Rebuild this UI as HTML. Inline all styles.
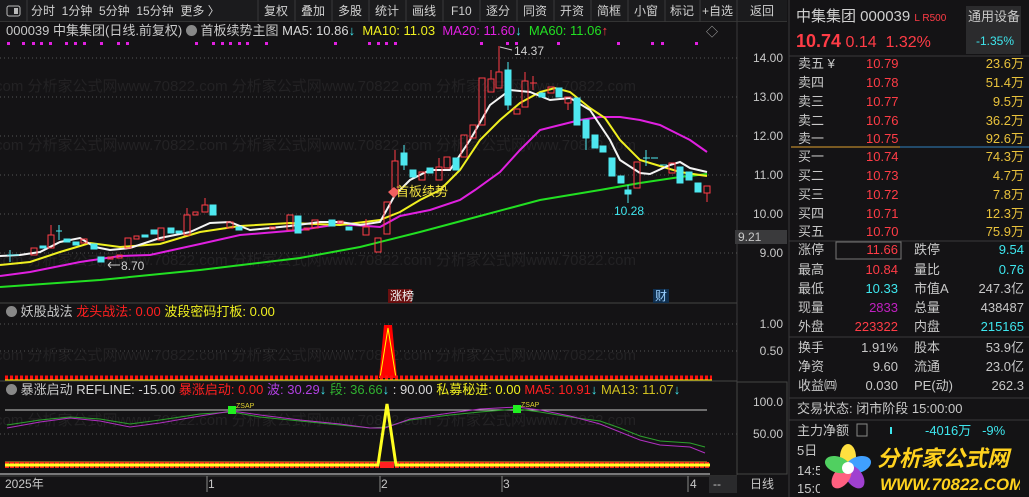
<!DOCTYPE html><html><head><meta charset="utf-8"><style>
*{margin:0;padding:0;box-sizing:border-box}
body{width:1029px;height:497px;background:#141315;overflow:hidden;position:relative;font-family:"Liberation Sans","Noto Sans CJK SC",sans-serif;font-size:12px;color:#c8c8c8}
.a{position:absolute;white-space:nowrap;line-height:14px}
.tb{position:absolute;top:0;height:22px;line-height:22px;font-size:12px;color:#d0d0d0}
.r{color:#ff3c46}.c{color:#3ee6ee}.y{color:#e9c23c}.w{color:#d8d8d8}
.rt{text-align:right}
.row{position:absolute;left:798px;width:226px;height:18px;line-height:18px;font-size:13px;display:flex;overflow:hidden}
.row span{display:block}
</style></head><body>
<div style="position:absolute;left:0;top:0;width:787px;height:22px;background:#1b1b1d;border-bottom:1px solid #333"></div>
<svg style="position:absolute;left:0;top:0" width="1029" height="497">
<rect x="7" y="6" width="13" height="10" rx="2" fill="none" stroke="#bbb"/><rect x="14" y="8" width="4" height="6" fill="#bbb"/>
<g stroke="#3a3a3a"><line x1="27" y1="0" x2="27" y2="22"/><line x1="258" y1="0" x2="258" y2="22"/><line x1="295" y1="0" x2="295" y2="22"/><line x1="332" y1="0" x2="332" y2="22"/><line x1="369" y1="0" x2="369" y2="22"/><line x1="406" y1="0" x2="406" y2="22"/><line x1="443" y1="0" x2="443" y2="22"/><line x1="480" y1="0" x2="480" y2="22"/><line x1="517" y1="0" x2="517" y2="22"/><line x1="554" y1="0" x2="554" y2="22"/><line x1="591" y1="0" x2="591" y2="22"/><line x1="628" y1="0" x2="628" y2="22"/><line x1="665" y1="0" x2="665" y2="22"/><line x1="700" y1="0" x2="700" y2="22"/><line x1="737" y1="0" x2="737" y2="22"/></g>
<line x1="737" y1="22" x2="737" y2="475" stroke="#3a3a3a"/>
<line x1="789" y1="0" x2="789" y2="497" stroke="#3a3a3a"/>
<g stroke="#555" stroke-dasharray="1,3">
<line x1="0" y1="58" x2="737" y2="58"/><line x1="0" y1="97" x2="737" y2="97"/><line x1="0" y1="136" x2="737" y2="136"/><line x1="0" y1="175" x2="737" y2="175"/><line x1="0" y1="214" x2="737" y2="214"/><line x1="0" y1="253" x2="737" y2="253"/>
<line x1="0" y1="324" x2="737" y2="324"/><line x1="0" y1="351" x2="737" y2="351"/><line x1="0" y1="434" x2="737" y2="434"/>
</g>
<g stroke="#444"><line x1="0" y1="303" x2="737" y2="303"/><line x1="0" y1="381" x2="737" y2="381"/><line x1="0" y1="476" x2="737" y2="476"/></g>
<g fill="#232224" font-size="15" font-family="Liberation Sans,Noto Sans CJK SC,sans-serif">
<text x="-5" y="91">com 分析家公式网www.70822.com 分析家公式网www.70822.com 分析家公式网www.70822.com</text>
<text x="-5" y="150">com 分析家公式网www.70822.com 分析家公式网www.70822.com 分析家公式网www.70822.com</text>
<text x="-5" y="265">com 分析家公式网www.70822.com 分析家公式网www.70822.com 分析家公式网www.70822.com</text>
<text x="-5" y="360">com 分析家公式网www.70822.com 分析家公式网www.70822.com 分析家公式网www.70822.com</text>
<text x="-5" y="425">com 分析家公式网www.70822.com 分析家公式网www.70822.com 分析家公式网www.70822.com</text>
</g>
<g fill="#e020e0"><rect x="7" y="42" width="3" height="3"/><rect x="22" y="42" width="3" height="3"/><rect x="32" y="42" width="3" height="3"/><rect x="40" y="42" width="3" height="3"/><rect x="49" y="42" width="3" height="3"/><rect x="65" y="42" width="3" height="3"/><rect x="74" y="42" width="3" height="3"/><rect x="83" y="42" width="3" height="3"/><rect x="100" y="42" width="3" height="3"/><rect x="117" y="42" width="3" height="3"/><rect x="126" y="42" width="3" height="3"/><rect x="195" y="42" width="3" height="3"/><rect x="212" y="42" width="3" height="3"/><rect x="221" y="42" width="3" height="3"/><rect x="229" y="42" width="3" height="3"/><rect x="238" y="42" width="3" height="3"/><rect x="246" y="42" width="3" height="3"/><rect x="265" y="42" width="3" height="3"/><rect x="334" y="42" width="3" height="3"/><rect x="368" y="42" width="3" height="3"/><rect x="377" y="42" width="3" height="3"/><rect x="385" y="42" width="3" height="3"/><rect x="394" y="42" width="3" height="3"/><rect x="480" y="42" width="3" height="3"/><rect x="506" y="42" width="3" height="3"/><rect x="515" y="42" width="3" height="3"/><rect x="557" y="42" width="3" height="3"/><rect x="617" y="42" width="3" height="3"/><rect x="651" y="42" width="3" height="3"/><rect x="661" y="42" width="3" height="3"/><rect x="695" y="42" width="3" height="3"/></g>
<polyline fill="none" stroke="#22e022" stroke-width="2" points="0,287 100,280 200,270 300,258 360,247 420,232 480,216 540,200 600,190 640,183 680,177 707,174"/>
<polyline fill="none" stroke="#e020e0" stroke-width="2" points="0,276 30,272 80,262 120,256 150,255 200,244 240,235 300,230 340,224 380,227 400,216 430,210 460,200 475,190 500,172 520,150 540,130 560,125 580,120 600,117 620,117 640,120 660,125 680,135 690,140 707,152"/>
<polyline fill="none" stroke="#f0f020" stroke-width="2" points="0,265 30,262 60,252 90,243 120,247 160,244 200,232 240,226 290,223 340,225 380,220 400,212 420,200 440,190 460,170 480,140 500,120 520,103 540,92 555,88 570,92 590,108 605,118 620,140 640,160 660,166 680,172 700,175 707,176"/>
<polyline fill="none" stroke="#f4f4f4" stroke-width="2" points="0,256 20,255 40,252 60,242 80,238 95,247 110,250 130,248 160,238 190,232 210,223 230,222 250,230 270,228 290,226 320,222 340,222 360,225 380,222 395,195 410,180 430,170 450,170 470,140 490,105 510,90 530,92 550,100 570,98 590,110 610,140 620,160 640,173 650,174 670,165 680,162 690,168 707,172"/>
<g stroke="#ff3c46" fill="none">
<rect x="31" y="248" width="6" height="7"/><rect x="48" y="235" width="6" height="13"/><line x1="51" y1="225" x2="51" y2="235"/><rect x="81" y="239" width="6" height="4"/><rect x="108" y="257" width="5" height="2"/><rect x="117" y="255" width="5" height="3"/><rect x="125" y="238" width="6" height="10"/><rect x="134" y="236" width="5" height="3"/><rect x="158" y="228" width="6" height="12"/><rect x="184" y="215" width="6" height="20"/><line x1="187" y1="208" x2="187" y2="215"/><rect x="193" y="212" width="5" height="3"/><rect x="202" y="205" width="6" height="7"/><line x1="205" y1="198" x2="205" y2="205"/><rect x="227" y="222" width="6" height="6"/><rect x="270" y="227" width="5" height="2"/><rect x="287" y="215" width="6" height="15"/><rect x="304" y="228" width="5" height="2"/><rect x="312" y="220" width="6" height="8"/><rect x="338" y="221" width="5" height="2"/><rect x="363" y="227" width="6" height="8"/><line x1="366" y1="219" x2="366" y2="227"/>
<rect x="375" y="238" width="6" height="14"/><rect x="384" y="202" width="6" height="32"/><rect x="392" y="161" width="6" height="32"/><line x1="395" y1="150" x2="395" y2="161"/><rect x="419" y="172" width="6" height="8"/><rect x="436" y="167" width="6" height="13"/><line x1="439" y1="158" x2="439" y2="167"/><rect x="444" y="157" width="6" height="11"/><rect x="461" y="135" width="6" height="22"/><rect x="470" y="125" width="6" height="13"/><rect x="479" y="78" width="6" height="47"/><rect x="488" y="79" width="6" height="13"/><line x1="491" y1="70" x2="491" y2="79"/><rect x="496" y="72" width="6" height="16"/><line x1="499" y1="46" x2="499" y2="72"/><rect x="514" y="109" width="6" height="5"/><rect x="522" y="81" width="6" height="26"/><line x1="525" y1="72" x2="525" y2="81"/><line x1="530" y1="83" x2="537" y2="83"/><line x1="533" y1="76" x2="533" y2="90"/><rect x="548" y="87" width="6" height="6"/><rect x="565" y="97" width="6" height="6"/><line x1="568" y1="103" x2="568" y2="110"/><rect x="634" y="162" width="6" height="26"/><rect x="669" y="163" width="6" height="10"/><rect x="704" y="186" width="6" height="7"/><line x1="707" y1="193" x2="707" y2="202"/>
</g>
<g fill="#4ee8f0" stroke="#4ee8f0">
<line x1="7" y1="255" x2="14" y2="255"/><line x1="10" y1="250" x2="10" y2="262"/><line x1="13" y1="255" x2="19" y2="255"/><rect x="40" y="246" width="6" height="2"/><line x1="59" y1="225" x2="59" y2="240"/><line x1="56" y1="231" x2="62" y2="231"/><rect x="64" y="239" width="6" height="3"/><rect x="73" y="242" width="6" height="3"/><rect x="91" y="244" width="6" height="5"/><rect x="98" y="257" width="6" height="5"/><rect x="142" y="235" width="6" height="2"/><rect x="151" y="230" width="6" height="4"/><rect x="168" y="228" width="6" height="5"/><rect x="176" y="231" width="6" height="2"/><rect x="210" y="205" width="6" height="10"/><rect x="236" y="227" width="6" height="3"/><rect x="295" y="216" width="6" height="17"/><rect x="329" y="220" width="6" height="6"/><rect x="346" y="227" width="6" height="3"/>
<rect x="401" y="153" width="6" height="12"/><line x1="404" y1="145" x2="404" y2="170"/><rect x="410" y="170" width="6" height="7"/><rect x="427" y="168" width="6" height="5"/><rect x="453" y="158" width="6" height="12"/><rect x="505" y="70" width="6" height="35"/><line x1="508" y1="62" x2="508" y2="110"/><rect x="539" y="93" width="6" height="4"/><rect x="556" y="88" width="6" height="9"/><rect x="574" y="98" width="6" height="27"/><rect x="583" y="120" width="6" height="18"/><line x1="586" y1="138" x2="586" y2="150"/><rect x="592" y="135" width="6" height="13"/><rect x="600" y="146" width="6" height="6"/><rect x="609" y="158" width="6" height="18"/><rect x="618" y="176" width="6" height="7"/><rect x="625" y="190" width="6" height="4"/><line x1="628" y1="185" x2="628" y2="203"/><line x1="643" y1="158" x2="650" y2="158"/><line x1="646" y1="150" x2="646" y2="166"/><line x1="651" y1="158" x2="658" y2="158"/><line x1="660" y1="165" x2="667" y2="165"/><rect x="677" y="167" width="6" height="16"/><rect x="686" y="172" width="6" height="8"/><rect x="695" y="183" width="6" height="9"/></g>
<text x="514" y="55" fill="#d0d0d0" font-size="12" font-family="Liberation Sans">14.37</text><path d="M500 47 L512 50" stroke="#ccc"/>
<text x="614" y="215" fill="#3ee6ee" font-size="12" font-family="Liberation Sans">10.28</text>
<text x="121" y="270" fill="#d0d0d0" font-size="12" font-family="Liberation Sans">8.70</text><path d="M108 265 L120 265 M108 265 l3 -3 M108 265 l3 3" stroke="#ccc" fill="none"/>
<path d="M388 192 l6 -5 l6 5 l-6 6z" fill="#f06060"/>
<text x="396" y="196" fill="#f0e040" font-size="13" font-family="Noto Sans CJK SC">首板续势</text>
<rect x="388" y="289" width="24" height="14" fill="#6a1010"/><text x="390" y="300" fill="#f0f0f0" font-size="12" font-family="Noto Sans CJK SC">涨榜</text>
<rect x="653" y="289" width="16" height="14" fill="#103050"/><text x="655" y="300" fill="#9ad0ff" font-size="12" font-family="Noto Sans CJK SC">财</text>
<path d="M379 378 L384 325 L392 325 L397 378z" fill="#ff0000"/><path d="M380 378 L388 328 L396 378" stroke="#ff0" fill="none"/>
<line x1="5" y1="378" x2="712" y2="378" stroke="#ff1010" stroke-width="5" stroke-dasharray="3,2"/>
<line x1="5" y1="380" x2="712" y2="380" stroke="#ffee00"/>
<line x1="5" y1="410" x2="707" y2="410" stroke="#c8c8c8"/>
<polyline fill="none" stroke="#2da02d" points="7,425 40,420 70,417 100,419 130,424 160,420 200,414 232,412 260,417 300,421 340,425 370,428 385,427 410,420 450,415 480,412 517,409 540,412 570,417 600,421 620,428 640,436 660,441 690,443 705,447"/>
<polyline fill="none" stroke="#b030c0" points="7,428 40,422 70,418 100,421 130,427 160,423 200,416 232,411 260,415 300,420 340,424 370,428 385,428 410,419 450,413 480,409 517,407 540,410 570,416 600,424 620,432 640,440 660,445 690,447 705,453"/>
<rect x="228" y="406" width="8" height="8" fill="#20f020"/><rect x="513" y="405" width="8" height="8" fill="#20f020"/>
<text x="236" y="408" fill="#e0d030" font-size="7" font-family="Liberation Sans">ZSAP</text><text x="521" y="407" fill="#e0d030" font-size="7" font-family="Liberation Sans">ZSAP</text>
<line x1="5" y1="462" x2="707" y2="462" stroke="#e0a020"/>
<line x1="5" y1="465" x2="710" y2="465" stroke="#ff2020" stroke-width="6" stroke-dasharray="4,1"/>
<polyline fill="none" stroke="#ffff20" stroke-width="3" points="5,465 378,465 387,404 396,465 710,465"/>
<rect x="384" y="462" width="6" height="6" fill="#ff2020"/>
<line x1="0" y1="474" x2="710" y2="474" stroke="#ddd"/>
<g stroke="#888"><line x1="207" y1="476" x2="207" y2="492"/><line x1="380" y1="476" x2="380" y2="492"/><line x1="502" y1="476" x2="502" y2="492"/><line x1="688" y1="476" x2="688" y2="492"/></g>
<rect x="709" y="476" width="28" height="17" fill="#2a2a2c"/>
<rect x="737" y="382" width="50" height="92" fill="none" stroke="#444"/>
<rect x="735" y="230" width="52" height="14" fill="#3a3a3c"/>
<rect x="966" y="6" width="55" height="48" fill="#2b2b2d"/>
<line x1="789" y1="56" x2="1029" y2="56" stroke="#3a3a3a"/>
<line x1="791" y1="147" x2="900" y2="147" stroke="#e0a030"/><line x1="900" y1="147" x2="1029" y2="147" stroke="#3080c0"/>
<g stroke="#3a3a3a"><line x1="789" y1="241" x2="1029" y2="241"/><line x1="789" y1="337" x2="1029" y2="337"/><line x1="789" y1="398" x2="1029" y2="398"/><line x1="789" y1="420" x2="1029" y2="420"/></g>
<rect x="836" y="242" width="65" height="17" fill="none" stroke="#777"/>
<rect x="857" y="424" width="10" height="12" fill="none" stroke="#888"/>
<line x1="891" y1="427" x2="891" y2="434" stroke="#3ee6ee" stroke-width="2"/>
</svg>
<div class="tb" style="left:31px">分时&nbsp;&nbsp;1分钟&nbsp;&nbsp;5分钟&nbsp;&nbsp;15分钟&nbsp;&nbsp;更多 〉</div>
<div class="tb" style="left:264px">复权</div><div class="tb" style="left:301px">叠加</div><div class="tb" style="left:338px">多股</div><div class="tb" style="left:375px">统计</div><div class="tb" style="left:412px">画线</div><div class="tb" style="left:451px">F10</div><div class="tb" style="left:486px">逐分</div><div class="tb" style="left:523px">同资</div><div class="tb" style="left:560px">开资</div><div class="tb" style="left:597px">简框</div><div class="tb" style="left:634px">小窗</div><div class="tb" style="left:670px">标记</div><div class="tb" style="left:702px">+自选</div><div class="tb" style="left:750px">返回</div>
<div class="a" style="left:6px;top:24px;font-size:13px">000039 中集集团(日线.前复权) <span style="display:inline-block;width:11px;height:11px;border-radius:6px;background:#888;vertical-align:-1px"></span> 首板续势主图 <span class="w">MA5: 10.86</span><span class="c">↓</span> &nbsp;<span style="color:#f0f020">MA10: 11.03</span> &nbsp;<span style="color:#e020e0">MA20: 11.60</span><span class="c">↓</span> &nbsp;<span style="color:#22e022">MA60: 11.06</span><span class="r">↑</span></div>
<div class="a" style="left:706px;top:25px;color:#aaa">◇</div>
<div class="a" style="left:6px;top:305px;font-size:13px"><span style="display:inline-block;width:11px;height:11px;border-radius:6px;background:#888;vertical-align:-1px"></span> 妖股战法 <span style="color:#ff2020">龙头战法: 0.00</span> <span style="color:#f0f020">波段密码打板: 0.00</span></div>
<div class="a" style="left:6px;top:383px;font-size:13px"><span style="display:inline-block;width:11px;height:11px;border-radius:6px;background:#888;vertical-align:-1px"></span> 暴涨启动 <span class="w">REFLINE: -15.00</span> <span style="color:#ff2020">暴涨启动: 0.00</span> <span style="color:#b040e0">波: 30.29</span><span class="c">↓</span> <span style="color:#30b030">段: 36.66</span><span class="c">↓</span> <span class="w">: 90.00</span> <span style="color:#f0f020">私募秘进: 0.00</span> <span style="color:#ff2020">MA5: 10.91</span><span class="c">↓</span> <span style="color:#d0c020">MA13: 11.07</span><span class="c">↓</span></div>
<div class="a rt" style="left:740px;width:43px;top:51px">14.00</div><div class="a rt" style="left:740px;width:43px;top:90px">13.00</div><div class="a rt" style="left:740px;width:43px;top:129px">12.00</div><div class="a rt" style="left:740px;width:43px;top:168px">11.00</div><div class="a rt" style="left:740px;width:43px;top:207px">10.00</div><div class="a" style="left:738px;top:230px">9.21</div><div class="a rt" style="left:740px;width:43px;top:246px">9.00</div>
<div class="a rt" style="left:740px;width:43px;top:317px">1.00</div><div class="a rt" style="left:740px;width:43px;top:344px">0.50</div>
<div class="a rt" style="left:740px;width:43px;top:395px">100.0</div><div class="a rt" style="left:740px;width:43px;top:427px">50.00</div>
<div class="a" style="left:5px;top:477px">2025年</div><div class="a" style="left:208px;top:477px">1</div><div class="a" style="left:381px;top:477px">2</div><div class="a" style="left:503px;top:477px">3</div><div class="a" style="left:690px;top:477px">4</div><div class="a" style="left:713px;top:477px">--</div><div class="a" style="left:750px;top:477px">日线</div>
<div class="a" style="left:796px;top:8px;font-size:15px;line-height:18px;color:#d0d0d0">中集集团 000039 <span class="r" style="font-size:10px">L R500</span></div>
<div class="a" style="left:968px;top:10px;font-size:13px">通用设备</div>
<div class="a c" style="left:976px;top:34px">-1.35%</div>
<div class="a r" style="left:796px;top:32px;font-size:16px;line-height:18px"><b style="font-size:18px">10.74</b> 0.14&nbsp; 1.32%</div>
<div class="row" style="top:55px"><span style="width:68px">卖五 ¥</span><span class="r" style="width:60px">10.79</span><span class="y" style="flex:1;text-align:right">23.6万</span></div>
<div class="row" style="top:74px"><span style="width:68px">卖四</span><span class="r" style="width:60px">10.78</span><span class="y" style="flex:1;text-align:right">51.4万</span></div>
<div class="row" style="top:93px"><span style="width:68px">卖三</span><span class="r" style="width:60px">10.77</span><span class="y" style="flex:1;text-align:right">9.5万</span></div>
<div class="row" style="top:112px"><span style="width:68px">卖二</span><span class="r" style="width:60px">10.76</span><span class="y" style="flex:1;text-align:right">36.2万</span></div>
<div class="row" style="top:130px"><span style="width:68px">卖一</span><span class="r" style="width:60px">10.75</span><span class="y" style="flex:1;text-align:right">92.6万</span></div>
<div class="row" style="top:148px"><span style="width:68px">买一</span><span class="r" style="width:60px">10.74</span><span class="y" style="flex:1;text-align:right">74.3万</span></div>
<div class="row" style="top:167px"><span style="width:68px">买二</span><span class="r" style="width:60px">10.73</span><span class="y" style="flex:1;text-align:right">4.7万</span></div>
<div class="row" style="top:186px"><span style="width:68px">买三</span><span class="r" style="width:60px">10.72</span><span class="y" style="flex:1;text-align:right">7.8万</span></div>
<div class="row" style="top:205px"><span style="width:68px">买四</span><span class="r" style="width:60px">10.71</span><span class="y" style="flex:1;text-align:right">12.3万</span></div>
<div class="row" style="top:223px"><span style="width:68px">买五</span><span class="r" style="width:60px">10.70</span><span class="y" style="flex:1;text-align:right">75.9万</span></div>
<div class="row" style="top:241px"><span style="width:40px">涨停</span><span class="r" style="width:60px;text-align:right">11.66</span><span style="width:50px;margin-left:16px">跌停</span><span class="c" style="flex:1;text-align:right">9.54</span></div>
<div class="row" style="top:261px"><span style="width:40px">最高</span><span class="r" style="width:60px;text-align:right">10.84</span><span style="width:50px;margin-left:16px">量比</span><span class="c" style="flex:1;text-align:right">0.76</span></div>
<div class="row" style="top:280px"><span style="width:40px">最低</span><span class="c" style="width:60px;text-align:right">10.33</span><span style="width:50px;margin-left:16px">市值A</span><span style="flex:1;text-align:right">247.3亿</span></div>
<div class="row" style="top:299px"><span style="width:40px">现量</span><span style="width:60px;text-align:right;color:#c020c0">2833</span><span style="width:50px;margin-left:16px">总量</span><span style="flex:1;text-align:right">438487</span></div>
<div class="row" style="top:318px"><span style="width:40px">外盘</span><span class="r" style="width:60px;text-align:right">223322</span><span style="width:50px;margin-left:16px">内盘</span><span class="c" style="flex:1;text-align:right">215165</span></div>
<div class="row" style="top:339px"><span style="width:40px">换手</span><span style="width:60px;text-align:right">1.91%</span><span style="width:50px;margin-left:16px">股本</span><span style="flex:1;text-align:right">53.9亿</span></div>
<div class="row" style="top:358px"><span style="width:40px">净资</span><span style="width:60px;text-align:right">9.60</span><span style="width:50px;margin-left:16px">流通</span><span style="flex:1;text-align:right">23.0亿</span></div>
<div class="row" style="top:377px"><span style="width:40px">收益㈣</span><span style="width:60px;text-align:right">0.030</span><span style="width:50px;margin-left:16px">PE(动)</span><span style="flex:1;text-align:right">262.3</span></div>
<div class="a" style="left:797px;top:402px;font-size:13px">交易状态: 闭市阶段 15:00:00</div>
<div class="a" style="left:797px;top:424px;font-size:13px">主力净额</div>
<div class="a c" style="left:925px;top:424px;font-size:13px">-4016万&nbsp;&nbsp; -9%</div>
<div class="a" style="left:797px;top:444px;font-size:13px">5日</div>
<div class="a" style="left:797px;top:464px;font-size:13px">14:5</div>
<div class="a" style="left:797px;top:482px;font-size:13px">15:0</div>
<svg style="position:absolute;left:820px;top:440px" width="200" height="57">
<rect width="200" height="57" fill="#131313"/>
<g transform="translate(28,28)"><ellipse rx="8" ry="13" cy="-11" fill="#ffe040"/><ellipse rx="8" ry="13" cy="-11" fill="#40a0ff" transform="rotate(72)"/><ellipse rx="8" ry="13" cy="-11" fill="#a040d0" transform="rotate(144)"/><ellipse rx="8" ry="13" cy="-11" fill="#ff6080" transform="rotate(216)"/><ellipse rx="8" ry="13" cy="-11" fill="#50d060" transform="rotate(288)"/><circle r="6" fill="#fff"/></g>
<text x="57" y="26" fill="#ffd21e" font-size="22" font-weight="bold" font-style="italic" font-family="Noto Sans CJK SC">分析家公式网</text>
<text x="60" y="50" fill="#ffd21e" font-size="17" font-weight="bold" font-style="italic" font-family="Liberation Sans">WWW.70822.COM</text>
</svg>
</body></html>
